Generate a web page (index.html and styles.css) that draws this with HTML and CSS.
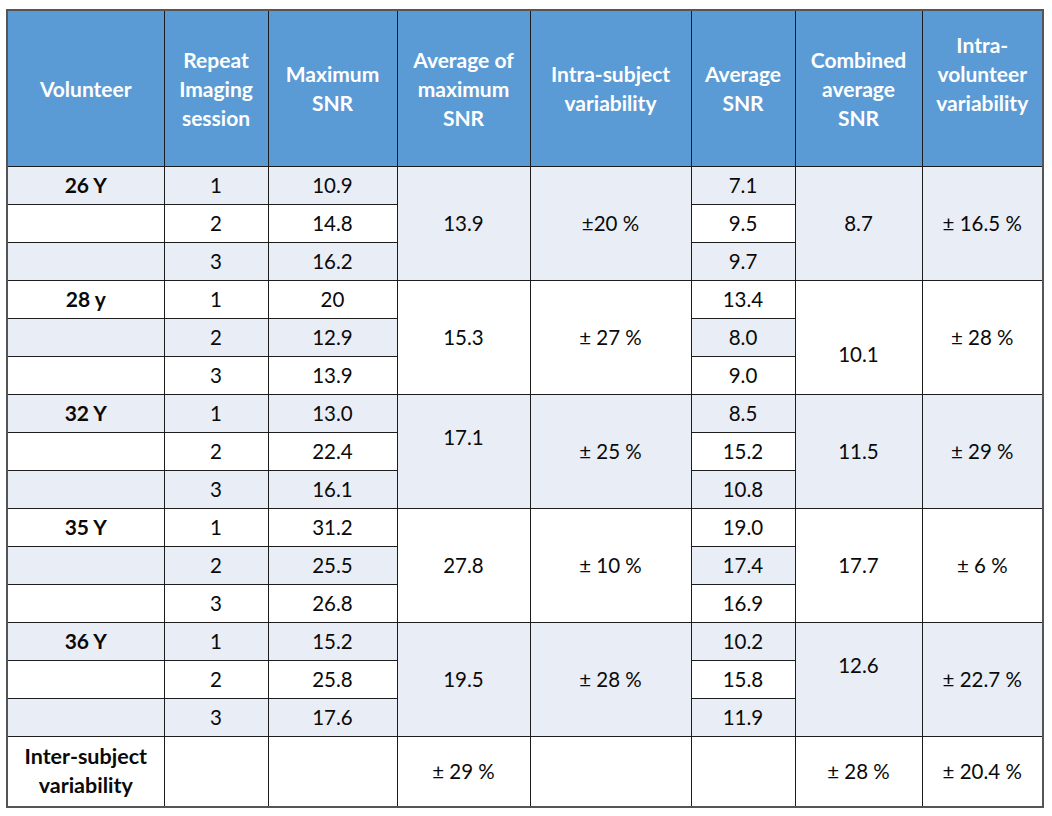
FILE: index.html
```html
<!DOCTYPE html>
<html>
<head>
<meta charset="utf-8">
<link rel="stylesheet" href="styles.css">
</head>
<body>
<table class="snr">
  <colgroup>
    <col class="c1"><col class="c2"><col class="c3"><col class="c4"><col class="c5"><col class="c6"><col class="c7"><col class="c8">
  </colgroup>
  <thead>
    <tr class="head">
      <th>Volunteer</th>
      <th>Repeat Imaging session</th>
      <th>Maximum SNR</th>
      <th>Average of maximum SNR</th>
      <th>Intra-subject variability</th>
      <th>Average SNR</th>
      <th>Combined<br>average<br>SNR</th>
      <th class="raise">Intra-<br>volunteer variability</th>
    </tr>
  </thead>
  <tbody>
    <tr class="top">
      <td class="sh vol">26 Y</td><td class="sh">1</td><td class="sh">10.9</td>
      <td class="sh" rowspan="3">13.9</td><td class="sh" rowspan="3">±20 %</td>
      <td class="sh">7.1</td>
      <td class="sh" rowspan="3">8.7</td><td class="sh" rowspan="3">± 16.5 %</td>
    </tr>
    <tr><td></td><td>2</td><td>14.8</td><td>9.5</td></tr>
    <tr><td class="sh"></td><td class="sh">3</td><td class="sh">16.2</td><td class="sh">9.7</td></tr>

    <tr class="top">
      <td class="vol">28 y</td><td>1</td><td>20</td>
      <td rowspan="3">15.3</td><td rowspan="3">± 27 %</td>
      <td>13.4</td>
      <td rowspan="3" class="down">10.1</td><td rowspan="3">± 28 %</td>
    </tr>
    <tr><td class="sh"></td><td class="sh">2</td><td class="sh">12.9</td><td class="sh">8.0</td></tr>
    <tr><td></td><td>3</td><td>13.9</td><td>9.0</td></tr>

    <tr class="top">
      <td class="sh vol">32 Y</td><td class="sh">1</td><td class="sh">13.0</td>
      <td class="sh up" rowspan="3">17.1</td><td class="sh" rowspan="3">± 25 %</td>
      <td class="sh">8.5</td>
      <td class="sh" rowspan="3">11.5</td><td class="sh" rowspan="3">± 29 %</td>
    </tr>
    <tr><td></td><td>2</td><td>22.4</td><td>15.2</td></tr>
    <tr><td class="sh"></td><td class="sh">3</td><td class="sh">16.1</td><td class="sh">10.8</td></tr>

    <tr class="top">
      <td class="vol">35 Y</td><td>1</td><td>31.2</td>
      <td rowspan="3">27.8</td><td rowspan="3">± 10 %</td>
      <td>19.0</td>
      <td rowspan="3">17.7</td><td rowspan="3">± 6 %</td>
    </tr>
    <tr><td class="sh"></td><td class="sh">2</td><td class="sh">25.5</td><td class="sh">17.4</td></tr>
    <tr><td></td><td>3</td><td>26.8</td><td>16.9</td></tr>

    <tr class="top">
      <td class="sh vol">36 Y</td><td class="sh">1</td><td class="sh">15.2</td>
      <td class="sh" rowspan="3">19.5</td><td class="sh" rowspan="3">± 28 %</td>
      <td class="sh">10.2</td>
      <td class="sh up" rowspan="3">12.6</td><td class="sh" rowspan="3">± 22.7 %</td>
    </tr>
    <tr><td></td><td>2</td><td>25.8</td><td>15.8</td></tr>
    <tr><td class="sh"></td><td class="sh">3</td><td class="sh">17.6</td><td class="sh">11.9</td></tr>

    <tr class="foot top">
      <td class="label">Inter-subject variability</td>
      <td></td><td></td>
      <td>± 29 %</td><td></td><td></td>
      <td>± 28 %</td><td>± 20.4 %</td>
    </tr>
  </tbody>
</table>
</body>
</html>
```
FILE: styles.css
```css
html, body {
  margin: 0;
  padding: 0;
  background: #ffffff;
}
body {
  padding: 9px 0 0 6px;
  font-family: Lato, "Liberation Sans", sans-serif;
  color: #000;
}
.snr {
  border-collapse: collapse;
  table-layout: fixed;
  width: 1037px;
  border: 2px solid #555;
}
.c1 { width: 157px; }
.c2 { width: 104px; }
.c3 { width: 129px; }
.c4 { width: 133px; }
.c5 { width: 161px; }
.c6 { width: 104px; }
.c7 { width: 127px; }
.c8 { width: 121px; }

.snr th, .snr td {
  border: 1px solid #1c1c1c;
  text-align: center;
  vertical-align: middle;
  padding: 0 3px;
  box-sizing: border-box;
}
.snr th {
  background: #5b9bd5;
  color: #ffffff;
  font-weight: 700;
  font-size: 21px;
  line-height: 29px;
  height: 156px;
}
.snr th.raise {
  padding-bottom: 29px;
}
.snr td {
  font-size: 20.5px;
  line-height: 24px;
  height: 38px;
  color: #0a0a0a;
}
.snr td.sh {
  background: #e9edf5;
}
.snr td.vol {
  font-weight: 700;
  font-size: 21px;
  vertical-align: top;
  padding-top: 6px;
}
.snr td.up {
  padding-bottom: 28px;
}
.snr td.down {
  padding-top: 34px;
}
.snr tr.foot td {
  height: 71px;
}
.snr td.label {
  font-weight: 700;
  font-size: 21.5px;
  line-height: 29px;
}
```
